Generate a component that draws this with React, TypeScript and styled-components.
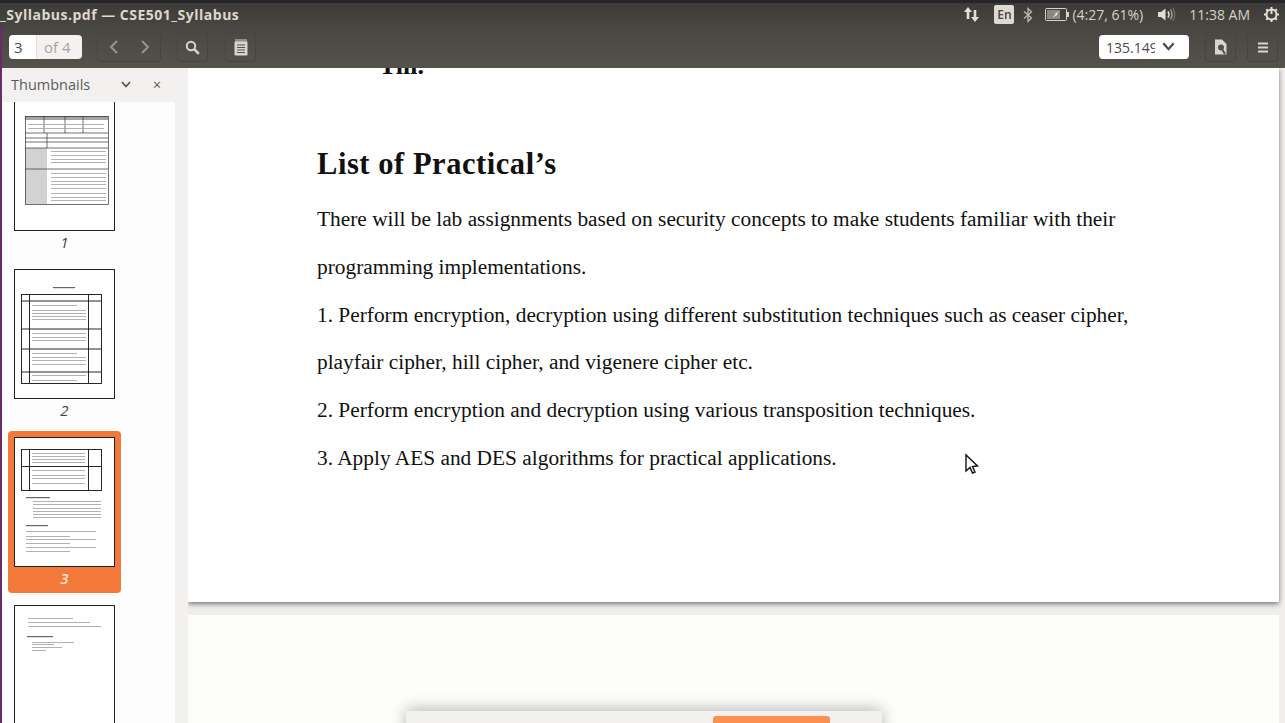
import React from "react";
import styled, { createGlobalStyle } from "styled-components";

const Global = createGlobalStyle`
  html, body { margin: 0; padding: 0; height: 100%; overflow: hidden; background: #f2f1f0; }
  #root { height: 100%; }
`;

const Screen = styled.div`
  position: relative;
  width: 1285px;
  height: 723px;
  overflow: hidden;
  display: flex;
  flex-direction: column;
  font-family: "Open Sans", "Noto Sans", sans-serif;
  border-top: 3px solid #26262a;
  box-sizing: border-box;
`;

const TopBars = styled.div`
  background: linear-gradient(#3d3b37 0, #4a4843 28px, #55524c 65px);
  height: 65px;
  flex: none;
  display: flex;
  flex-direction: column;
`;

const TitleBar = styled.div`
  height: 23px;
  display: flex;
  align-items: center;
  justify-content: space-between;
  padding-right: 5px;
`;

const Title = styled.div`
  color: #dcd8ce;
  font-size: 14px;
  font-weight: 700;
  letter-spacing: 0.5px;
  white-space: nowrap;
`;

const Indicators = styled.div`
  display: flex;
  align-items: center;
  color: #d6d2c8;
  font-size: 14px;
`;

const LangBadge = styled.span`
  width: 20px;
  height: 19px;
  margin: 0 9px 0 14px;
  border-radius: 2px;
  background: #dedad2;
  color: #45433f;
  font-size: 12px;
  font-weight: 600;
  display: flex;
  align-items: center;
  justify-content: center;
`;

const BatteryGap = styled.span`
  width: 12px;
`;

const BatteryText = styled.span`
  margin: 0 14px 0 3px;
  white-space: nowrap;
`;

const Clock = styled.span`
  margin: 0 13px 0 13px;
  white-space: nowrap;
`;

const Toolbar = styled.div`
  height: 42px;
  display: flex;
  align-items: center;
  padding: 0 7px 0 7px;
  border-left: 2px solid #6b2a68;
`;

const PageBox = styled.div`
  width: 73px;
  height: 24px;
  border-radius: 4px;
  display: flex;
  overflow: hidden;
  font-size: 15px;
  line-height: 24px;
  margin-right: 15px;
`;

const PageInput = styled.div`
  width: 28px;
  padding-left: 5px;
  box-sizing: border-box;
  background: #fff;
  border-right: 1px solid #e2e0dd;
  color: #4a4a4a;
`;

const PageTotal = styled.div`
  flex: 1;
  background: #f3f2f0;
  color: #a5a3a0;
  padding-left: 7px;
`;

const ToolGroup = styled.div<{ $width: number; $gap?: number }>`
  width: ${(p) => p.$width}px;
  height: 30px;
  box-sizing: border-box;
  border: 1px solid #474540;
  border-radius: 4px;
  display: flex;
  align-items: center;
  justify-content: space-around;
  flex: none;
  margin-right: ${(p) => p.$gap ?? 0}px;
`;

const Spacer = styled.div`
  flex: 1;
`;

const ZoomSelect = styled.div`
  width: 90px;
  height: 24px;
  box-sizing: border-box;
  border-radius: 4px;
  background: #fff;
  color: #4a4a4a;
  font-size: 14px;
  padding-left: 7px;
  margin-right: 16px;
  display: flex;
  align-items: center;
  position: relative;
`;

const ZoomValue = styled.span`
  width: 49px;
  overflow: hidden;
  white-space: nowrap;
`;

const ZoomGap = styled.span`
  width: 7px;
`;

const Body = styled.div`
  flex: 1;
  min-height: 0;
  display: flex;
  border-left: 2px solid #6b2a68;
`;

const Sidebar = styled.aside`
  width: 186px;
  flex: none;
  display: flex;
  flex-direction: column;
  background: #f2f1f0;
`;

const SideHeader = styled.div`
  height: 34px;
  flex: none;
  box-sizing: border-box;
  padding: 0 0 2px 9px;
  display: flex;
  align-items: center;
  color: #5c5b58;
  font-size: 14.5px;
`;

const HeaderLabel = styled.span`
  width: 110px;
`;

const CloseMark = styled.span`
  margin-left: 22px;
  font-size: 14px;
  color: #555;
`;

const ThumbList = styled.div`
  flex: 1;
  min-height: 0;
  margin-right: 13px;
  background: #fdfdfd;
  overflow: hidden;
  padding-left: 6px;
`;

const ThumbStack = styled.div`
  margin-top: -7px;
  display: flex;
  flex-direction: column;
`;

const ThumbCard = styled.div<{ $active?: boolean }>`
  width: 113px;
  height: 162px;
  box-sizing: border-box;
  padding: 6px;
  margin-bottom: 6px;
  border-radius: 4px;
  background: ${(p) => (p.$active ? "#f2793a" : "transparent")};
  display: flex;
  flex-direction: column;
  align-items: center;
`;

const ThumbPage = styled.svg`
  width: 101px;
  height: 130px;
  flex: none;
  display: block;
  background: #fff;
  filter: blur(0.3px);
`;

const ThumbLabel = styled.div<{ $active?: boolean }>`
  margin-top: 1px;
  font-size: 15px;
  line-height: 20px;
  font-style: italic;
  font-weight: ${(p) => (p.$active ? 600 : 400)};
  color: ${(p) => (p.$active ? "#ffe6d4" : "#444")};
`;

const Viewer = styled.main`
  flex: 1;
  min-width: 0;
  background: #f0efed;
  overflow: hidden;
  padding-right: 6px;
`;

const DocPage = styled.section`
  height: 534px;
  background: #fff;
  box-shadow: 0 2px 5px rgba(0, 0, 0, 0.5);
  box-sizing: border-box;
  padding: 0 0 0 129px;
  overflow: hidden;
  font-family: "Liberation Serif", "Times New Roman", serif;
  color: #111;
`;

const ClippedLine = styled.div`
  margin: -15px 0 0 62px;
  height: 26px;
  line-height: 26px;
  font-size: 26px;
  font-weight: 700;
`;

const Heading = styled.h1`
  margin: 61px 0 0;
  font-size: 30.5px;
  line-height: 48px;
  font-weight: 700;
  letter-spacing: 0.55px;
`;

const BodyLine = styled.p`
  margin: 0;
  font-size: 21.37px;
  line-height: 47.8px;
  white-space: nowrap;
`;

const Lines = styled.div`
  margin-top: 8px;
`;

const NextPage = styled.section`
  margin-top: 13px;
  height: 200px;
  background: #fdfdfc;
  padding: 96px 0 0 218px;
  box-sizing: border-box;
`;

const Dialog = styled.div`
  width: 476px;
  height: 60px;
  background: #f2f1ef;
  box-shadow: 0 -2px 14px rgba(0, 0, 0, 0.28);
  padding: 5px 0 0 307px;
  box-sizing: border-box;
`;

const DialogButton = styled.div`
  width: 117px;
  height: 40px;
  background: #fb9150;
  border-radius: 3px 3px 0 0;
`;

const Cursor = styled.svg`
  position: absolute;
  left: 964px;
  top: 448px;
`;

const Ic = { fill: "none", stroke: "#d9d5cb", strokeWidth: 2 };

const ArrowsIcon = () => (
  <svg width="17" height="17" viewBox="0 0 17 17">
    <path d="M5 1 L1 6 H3.7 V13 H6.3 V6 H9 Z" fill="#e4e0d8" />
    <path d="M12 16 L16 11 H13.3 V4 H10.7 V11 H8 Z" fill="#e4e0d8" />
  </svg>
);

const BluetoothIcon = () => (
  <svg width="10" height="16" viewBox="0 0 10 16">
    <path d="M1 4.5 L8.5 11 L5 14.5 V1.5 L8.5 5 L1 11.5" fill="none" stroke="#bdb9b0" strokeWidth="1.3" />
  </svg>
);

const BatteryIcon = () => (
  <svg width="24" height="13" viewBox="0 0 24 13">
    <rect x="0.5" y="0.5" width="21" height="12" rx="1" fill="none" stroke="#d6d2c8" />
    <rect x="2" y="2" width="13" height="9" fill="#8a877f" />
    <rect x="22" y="4" width="2" height="5" fill="#d6d2c8" />
    <path d="M7 10 L11 6 H9.5 L14 3 L11.5 6.5 H13 Z" fill="#f2efe8" />
  </svg>
);

const VolumeIcon = () => (
  <svg width="19" height="15" viewBox="0 0 19 15">
    <path d="M1 5 H4 L8.5 1.5 V13.5 L4 10 H1 Z" fill="#e0dcd3" />
    <path d="M11 4.5 Q13 7.5 11 10.5" fill="none" stroke="#e0dcd3" strokeWidth="1.5" />
    <path d="M13.5 2.5 Q16.5 7.5 13.5 12.5" fill="none" stroke="#a8a59c" strokeWidth="1.3" />
    <path d="M16 1 Q19.5 7.5 16 14" fill="none" stroke="#77746d" strokeWidth="1.1" />
  </svg>
);

const GearIcon = () => (
  <svg width="17" height="17" viewBox="0 0 17 17">
    <circle cx="8.5" cy="8.5" r="5" fill="none" stroke="#e4e0d8" strokeWidth="2" />
    <path d="M8.5 1 V8 M1 8.5 H3 M14 8.5 H16 M8.5 14 V16 M3.2 3.2 L4.8 4.8 M12.2 12.2 L13.8 13.8 M3.2 13.8 L4.8 12.2 M12.2 4.8 L13.8 3.2" stroke="#e4e0d8" strokeWidth="2" />
  </svg>
);

const ChevronLeft = () => (
  <svg width="10" height="14" viewBox="0 0 10 14">
    <path d="M8 1 L2 7 L8 13" {...Ic} stroke="#97948c" />
  </svg>
);

const ChevronRight = () => (
  <svg width="10" height="14" viewBox="0 0 10 14">
    <path d="M2 1 L8 7 L2 13" {...Ic} stroke="#97948c" />
  </svg>
);

const SearchIcon = () => (
  <svg width="15" height="15" viewBox="0 0 15 15">
    <circle cx="6" cy="6" r="4.2" {...Ic} />
    <path d="M9.2 9.2 L13.8 13.8" {...Ic} strokeWidth={2.6} />
  </svg>
);

const NotesIcon = () => (
  <svg width="14" height="17" viewBox="0 0 14 17">
    <rect x="0.5" y="2.5" width="13" height="14" rx="1" fill="#d9d5cb" />
    <path d="M2 0 V3 M4 0 V3 M6 0 V3 M8 0 V3 M10 0 V3 M12 0 V3" stroke="#d9d5cb" strokeWidth="1" />
    <path d="M3 6 H11 M3 8.5 H11 M3 11 H11 M3 13.5 H11" stroke="#55524c" strokeWidth="1" />
  </svg>
);

const DocSearchIcon = () => (
  <svg width="14" height="16" viewBox="0 0 14 16">
    <path d="M1 0.5 H8 L12.5 5 V15.5 H1 Z" fill="#d9d5cb" />
    <circle cx="7" cy="8.5" r="3" fill="#55524c" />
    <path d="M8.5 11 L11 15" stroke="#55524c" strokeWidth="2" />
  </svg>
);

const MenuIcon = () => (
  <svg width="10" height="11" viewBox="0 0 10 11">
    <path d="M0 1.5 H10 M0 5.5 H10 M0 9.5 H10" stroke="#d9d5cb" strokeWidth="2" />
  </svg>
);

const ChevronDown = ({ color, size }: { color: string; size: number }) => (
  <svg width={size} height={size * 0.7} viewBox="0 0 10 7">
    <path d="M1 1 L5 5.5 L9 1" fill="none" stroke={color} strokeWidth="1.7" />
  </svg>
);

// a row of greeked text in a thumbnail
const T = ({ x, y, w, dark }: { x: number; y: number; w: number; dark?: boolean }) => (
  <rect x={x} y={y} width={w} height={dark ? 1.2 : 0.9} fill={dark ? "#666" : "#aaa"} />
);

const Frame = () => <rect x="0.5" y="0.5" width="100" height="129" fill="none" stroke="#222" strokeWidth="1" />;

const ThumbOne = () => (
  <ThumbPage viewBox="0 0 101 130">
    <Frame />
    <rect x="11" y="47" width="22" height="56" fill="#d2d2d2" />
    <rect x="11" y="15" width="83" height="4" fill="#a5a5a5" />
    <g fill="none" stroke="#333" strokeWidth="0.7">
      <rect x="11.5" y="15.5" width="83" height="88" />
      <path d="M11 32 H94 M11 37 H94 M11 41 H94 M11 47 H94 M11 68 H94 M30 15 V32 M51 15 V32 M69 15 V32 M33 32 V47" />
    </g>
    {[23, 27].map((y) => (
      <T key={y} x={14} y={y} w={76} />
    ))}
    {[50, 54, 58, 61, 72, 76, 80, 83, 87, 92, 96, 99].map((y) => (
      <T key={y} x={37} y={y} w={55} />
    ))}
  </ThumbPage>
);

const ThumbTwo = () => (
  <ThumbPage viewBox="0 0 101 130">
    <Frame />
    <T x={39} y={18} w={22} dark />
    <g fill="none" stroke="#111" strokeWidth="0.9">
      <rect x="7.5" y="25.5" width="80" height="89" />
      <path d="M8 32 H87 M8 60 H87 M8 80 H87 M8 103 H87 M15.5 25 V114 M74.5 25 V114" />
    </g>
    {[36, 41, 44, 47, 50, 64, 68, 71, 84, 88, 91, 95, 106, 111].map((y) => (
      <T key={y} x={18} y={y} w={y % 3 === 0 ? 45 : 54} />
    ))}
  </ThumbPage>
);

const ThumbThree = () => (
  <ThumbPage viewBox="0 0 101 130">
    <Frame />
    <g fill="none" stroke="#111" strokeWidth="0.9">
      <rect x="7.5" y="12.5" width="80" height="41" />
      <path d="M8 29.5 H87 M15.5 12 V53 M74.5 12 V53" />
    </g>
    {[16, 19, 22, 25, 33, 38, 41, 46].map((y) => (
      <T key={y} x={18} y={y} w={53} />
    ))}
    <T x={12} y={60} w={24} dark />
    {[64, 67, 71, 74, 77, 80].map((y) => (
      <T key={y} x={19} y={y} w={68} />
    ))}
    <T x={12} y={88} w={22} dark />
    {[94, 99, 102, 106, 110, 114].map((y, i) => (
      <T key={y} x={12} y={y} w={i % 2 ? 44 : 70} />
    ))}
  </ThumbPage>
);

const ThumbFour = () => (
  <ThumbPage viewBox="0 0 101 130">
    <Frame />
    {[13, 17, 21].map((y, i) => (
      <T key={y} x={14} y={y} w={[45, 62, 73][i]} />
    ))}
    <T x={13} y={31} w={26} dark />
    {[37, 39, 42, 45].map((y, i) => (
      <T key={y} x={18} y={y} w={[42, 22, 30, 14][i]} />
    ))}
  </ThumbPage>
);

const thumbs = [
  { n: 1, Page: ThumbOne },
  { n: 2, Page: ThumbTwo },
  { n: 3, Page: ThumbThree, active: true },
  { n: 4, Page: ThumbFour },
];

const lines = [
  "There will be lab assignments based on security concepts to make students familiar with their",
  "programming implementations.",
  "1. Perform encryption, decryption using different substitution techniques such as ceaser cipher,",
  "playfair cipher, hill cipher, and vigenere cipher etc.",
  "2. Perform encryption and decryption using various transposition techniques.",
  "3. Apply AES and DES algorithms for practical applications.",
];

export default function App() {
  return (
    <Screen>
      <Global />
      <TopBars>
        <TitleBar>
          <Title>_Syllabus.pdf — CSE501_Syllabus</Title>
          <Indicators>
            <ArrowsIcon />
            <LangBadge>En</LangBadge>
            <BluetoothIcon />
            <BatteryGap />
            <BatteryIcon />
            <BatteryText>(4:27, 61%)</BatteryText>
            <VolumeIcon />
            <Clock>11:38 AM</Clock>
            <GearIcon />
          </Indicators>
        </TitleBar>
        <Toolbar>
          <PageBox>
            <PageInput>3</PageInput>
            <PageTotal>of 4</PageTotal>
          </PageBox>
          <ToolGroup $width={64} $gap={16}>
            <ChevronLeft />
            <ChevronRight />
          </ToolGroup>
          <ToolGroup $width={31} $gap={17}>
            <SearchIcon />
          </ToolGroup>
          <ToolGroup $width={31}>
            <NotesIcon />
          </ToolGroup>
          <Spacer />
          <ZoomSelect>
            <ZoomValue>135.149</ZoomValue>
            <ZoomGap />
            <ChevronDown color="#4a4a4a" size={13} />
          </ZoomSelect>
          <ToolGroup $width={31} $gap={11}>
            <DocSearchIcon />
          </ToolGroup>
          <ToolGroup $width={31}>
            <MenuIcon />
          </ToolGroup>
        </Toolbar>
      </TopBars>
      <Body>
        <Sidebar>
          <SideHeader>
            <HeaderLabel>Thumbnails</HeaderLabel>
            <ChevronDown color="#555" size={10} />
            <CloseMark>×</CloseMark>
          </SideHeader>
          <ThumbList>
            <ThumbStack>
              {thumbs.map(({ n, Page, active }) => (
                <ThumbCard key={n} $active={active}>
                  <Page />
                  <ThumbLabel $active={active}>{n}</ThumbLabel>
                </ThumbCard>
              ))}
            </ThumbStack>
          </ThumbList>
        </Sidebar>
        <Viewer>
          <DocPage>
            <ClippedLine>Till.</ClippedLine>
            <Heading>List of Practical’s</Heading>
            <Lines>
              {lines.map((l) => (
                <BodyLine key={l}>{l}</BodyLine>
              ))}
            </Lines>
          </DocPage>
          <NextPage>
            <Dialog>
              <DialogButton />
            </Dialog>
          </NextPage>
        </Viewer>
      </Body>
      <Cursor width="16" height="24" viewBox="0 0 16 24">
        <path d="M2 4 V20 L6 16.5 L8.5 22 L11 21 L8.5 15.5 L13.5 15 Z" fill="#fff" stroke="#111" strokeWidth="1.4" />
      </Cursor>
    </Screen>
  );
}
